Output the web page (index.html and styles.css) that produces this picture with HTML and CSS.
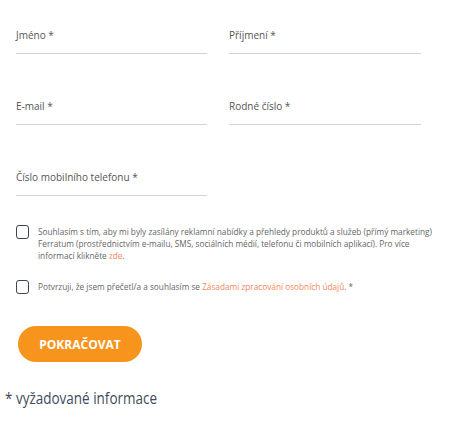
FILE: index.html
```html
<!DOCTYPE html>
<html lang="cs">
<head>
<meta charset="utf-8">
<link rel="stylesheet" href="styles.css">
</head>
<body>
<form class="form">
  <div class="fields">
    <div class="field"><span class="label">Jméno *</span></div>
    <div class="field"><span class="label">Příjmení *</span></div>
    <div class="field"><span class="label">E-mail *</span></div>
    <div class="field"><span class="label">Rodné číslo *</span></div>
    <div class="field"><span class="label">Číslo mobilního telefonu *</span></div>
  </div>
  <div class="consents">
    <label class="consent">
      <span class="box"></span>
      <span class="ctext">Souhlasím s tím, aby mi byly zasílány reklamní nabídky a přehledy produktů a služeb (přímý marketing) Ferratum (prostřednictvím e-mailu, SMS, sociálních médií, telefonu či mobilních aplikací). Pro více informací klikněte <a class="link">zde</a>.</span>
    </label>
    <label class="consent">
      <span class="box"></span>
      <span class="ctext">Potvrzuji, že jsem přečetl/a a souhlasím se <a class="link">Zásadami zpracování osobních údajů</a>. *</span>
    </label>
  </div>
  <button type="button" class="btn">POKRAČOVAT</button>
</form>
<p class="note">* vyžadované informace</p>
</body>
</html>
```

FILE: styles.css
```css
* { box-sizing: border-box; }
body {
  margin: 0;
  background: #fff;
  font-family: "Open Sans", "Noto Sans", sans-serif;
}
.form {
  padding: 0 0 0 16px;
}
.fields {
  display: grid;
  grid-template-columns: 191px 192px;
  column-gap: 22px;
  row-gap: 17px;
}
.field {
  padding: 28px 0 11px;
  border-bottom: 1px solid #d3d3d3;
}
.label {
  display: block;
  font-size: 10px;
  line-height: 14px;
  color: #555;
}
.consents {
  margin-top: 30px;
  display: flex;
  flex-direction: column;
  gap: 19px;
  width: 422px;
}
.consent {
  display: flex;
  align-items: flex-start;
  gap: 9px;
}
.box {
  flex: none;
  width: 13px;
  height: 14px;
  border: 1.5px solid #3b4553;
  border-radius: 3px;
  margin-top: -1px;
}
.ctext {
  font-size: 8.25px;
  line-height: 12px;
  color: #666;
}
.link {
  color: #f5875a;
  text-decoration: none;
}
.btn {
  display: block;
  margin: 32px 0 0 2px;
  width: 124px;
  height: 36px;
  border: none;
  border-radius: 18px;
  background: #f7941d;
  color: #fff;
  font-family: "Open Sans", "Noto Sans", sans-serif;
  font-weight: 700;
  font-size: 12px;
  padding: 0;
}
.note {
  margin: 26px 0 0 5px;
  font-family: "Open Sans", "Noto Sans", sans-serif;
  font-size: 15.5px;
  line-height: 20px;
  color: #3e4a5a;
  transform: scaleX(0.87);
  transform-origin: left center;
  white-space: nowrap;
}
```
